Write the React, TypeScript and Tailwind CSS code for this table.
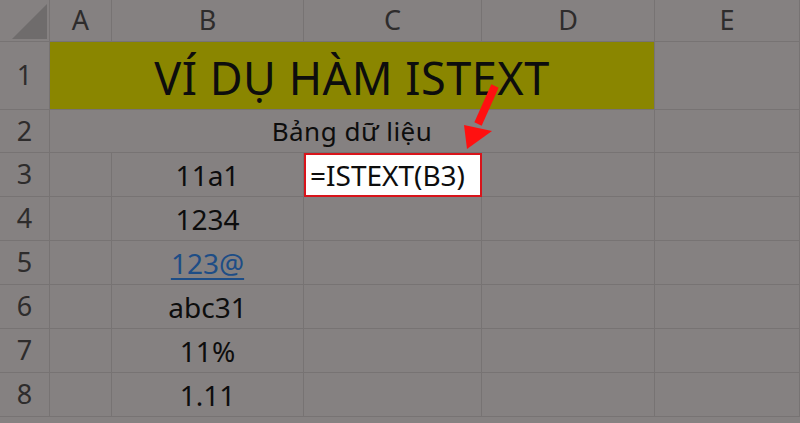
const cols = ["A", "B", "C", "D", "E"];

const data = ["11a1", "1234", "123@", "abc31", "11%", "1.11"];

const line = "border-r border-b border-[#777373]";

const RowHead = ({ n }: { n: number }) => (
  <div className={`${line} flex items-center justify-center text-[27px] text-[#2e2c2c]`}>
    {n}
  </div>
);

const Blank = () => <div className={line} />;

export default function App() {
  return (
    <div
      className="relative w-[800px] h-[423px] overflow-hidden bg-[#858181] text-[#0d0d0d]"
      style={{ fontFamily: '"Noto Sans", "Open Sans", sans-serif' }}
    >
      <div className="grid grid-cols-[50px_62px_192px_178px_173px_145px] grid-rows-[42px_68px_43px_44px_44px_44px_44px_44px_44px]">
        {/* corner */}
        <div className={`${line} relative`}>
          <svg width="50" height="42" className="absolute inset-0">
            <polygon points="12,39 47,4 47,39" fill="#6f6c6c" />
          </svg>
        </div>
        {cols.map((c) => (
          <div
            key={c}
            className={`${line} flex items-center justify-center text-[27px] text-[#2e2c2c]`}
          >
            {c}
          </div>
        ))}

        {/* row 1 */}
        <RowHead n={1} />
        <div className="col-span-4 border-r border-b border-[#777373] bg-[#8a8600] flex items-center justify-center pt-1 text-[45px] tracking-[0.5px]">
          VÍ DỤ HÀM ISTEXT
        </div>
        <Blank />

        {/* row 2 */}
        <RowHead n={2} />
        <div className="col-span-4 border-r border-b border-[#777373] flex items-center justify-center text-[26px] tracking-[0.5px]">
          Bảng dữ liệu
        </div>
        <Blank />

        {data.map((v, i) => (
          <div key={v} className="contents">
            <RowHead n={i + 3} />
            <Blank />
            <div className={`${line} flex items-center justify-center text-[28px]`}>
              {v === "123@" ? (
                <span className="text-[#1d4d86] underline underline-offset-4 decoration-2">{v}</span>
              ) : (
                v
              )}
            </div>
            {i === 0 ? (
              <div className="border-2 border-[#d8141b] bg-white flex items-center pl-1 text-[28px]">
                =ISTEXT(B3)
              </div>
            ) : (
              <Blank />
            )}
            <Blank />
            <Blank />
          </div>
        ))}
      </div>

      {/* red arrow */}
      <svg width="800" height="423" className="absolute inset-0 pointer-events-none">
        <line x1="495" y1="86" x2="478" y2="124" stroke="#ff1010" strokeWidth="8" />
        <polygon points="464,125 492,131 467,149" fill="#ff1010" />
      </svg>
    </div>
  );
}
